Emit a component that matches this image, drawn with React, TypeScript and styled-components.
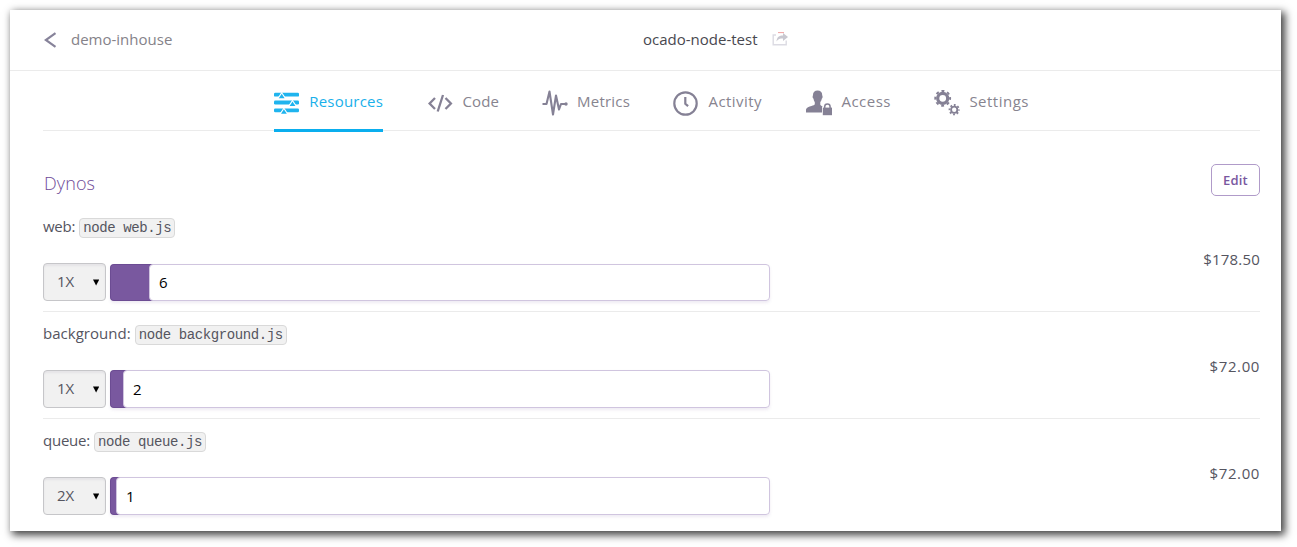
import React from "react";
import styled, { createGlobalStyle } from "styled-components";

const GlobalStyle = createGlobalStyle`
  * { box-sizing: border-box; }
  body {
    margin: 0;
    background: #fff;
    overflow: hidden;
    font-family: "Open Sans", sans-serif;
    font-size: 15px;
    color: #55555f;
  }
`;

const Stage = styled.div`
  height: 547px;
  padding: 10px 16px 16px 10px;
`;

const Panel = styled.main`
  height: 521px;
  background: #fff;
  box-shadow: 3px 3px 8px 1px rgba(0, 0, 0, 0.75);
`;

const Text = styled.span<{ $ls?: number }>`
  letter-spacing: ${(p) => p.$ls ?? 0}px;
  white-space: nowrap;
`;

const Header = styled.header`
  display: grid;
  grid-template-columns: 633px 1fr;
  align-items: center;
  height: 61px;
  border-bottom: 1px solid #ebebeb;
  span { margin-bottom: 2px; }
`;

const BackLink = styled.a`
  display: flex;
  align-items: center;
  padding-left: 34px;
  gap: 14px;
  color: #858289;
`;

const AppName = styled.div`
  display: flex;
  align-items: center;
  gap: 14px;
  color: #48484f;
  svg { margin-bottom: 2px; }
`;

const Tabs = styled.nav`
  display: flex;
  gap: 43px;
  height: 60px;
  margin: 0 21px 0 33px;
  padding-left: 231px;
  border-bottom: 1px solid #ebebeb;
`;

const Tab = styled.a<{ $width: number; $active?: boolean }>`
  display: flex;
  align-items: center;
  justify-content: space-between;
  width: ${(p) => p.$width}px;
  height: 61px;
  color: ${(p) => (p.$active ? "#1ab0ea" : "#87848f")};
  border-bottom: 3px solid ${(p) => (p.$active ? "#0aaeee" : "transparent")};
  svg { margin-top: 6px; }
  span { margin-top: 2px; }
`;

const Content = styled.section`
  padding: 0 21px 0 33px;
`;

const SectionHead = styled.div`
  display: flex;
  justify-content: space-between;
  align-items: flex-start;
  height: 73px;
  padding-top: 33px;
`;

const Title = styled.h2`
  margin: 6px 0 0 1px;
  font-size: 18px;
  line-height: 26px;
  font-weight: 300;
  letter-spacing: 0.1px;
  color: #6f4b98;
`;

const EditButton = styled.button`
  width: 49px;
  height: 32px;
  padding: 0;
  font: 600 13px "Open Sans", sans-serif;
  letter-spacing: 0.2px;
  color: #79589f;
  background: #fff;
  border: 1px solid #b09bc9;
  border-radius: 5px;
`;

const Row = styled.div`
  display: flex;
  justify-content: space-between;
  height: 107px;
  padding-top: 13px;

  & + & {
    padding-top: 12px;
    border-top: 1px solid #ebebeb;
  }
`;

const ProcessLine = styled.div`
  display: flex;
  align-items: center;
  gap: 4px;
  height: 22px;
  margin-bottom: 24px;
  span { margin-bottom: 4px; }
`;

const Command = styled.code`
  height: 20px;
  padding: 0 3px;
  font: 14px/18px "Liberation Mono", monospace;
  color: #55555f;
  letter-spacing: -0.4px;
  background: #f1f1f1;
  border: 1px solid #d9d9d9;
  border-radius: 4px;
`;

const Controls = styled.div`
  display: flex;
  align-items: flex-end;
  gap: 4px;
  height: 38px;
`;

const SizeSelect = styled.div`
  display: flex;
  align-items: center;
  justify-content: space-between;
  width: 63px;
  height: 38px;
  padding: 0 6px 0 13px;
  background: #f1f1f1;
  border: 1px solid #c6c6c9;
  border-radius: 4px;
  box-shadow: inset 0 2px 2px rgba(90, 80, 120, 0.08);
  span { margin-bottom: 2px; }
`;

const Slider = styled.div<{ $height: number }>`
  display: flex;
  width: 660px;
  height: ${(p) => p.$height}px;
  border-radius: 4px;
  box-shadow: 0 2px 3px rgba(121, 88, 159, 0.12);
`;

const Fill = styled.div<{ $width: number }>`
  width: ${(p) => p.$width + 4}px;
  margin-right: -4px;
  background: #79589f;
  border: solid #6c4c93;
  border-width: 1px 0 1px 1px;
  border-radius: 4px 0 0 4px;
`;

const Quantity = styled.div`
  display: flex;
  align-items: center;
  flex: 1;
  padding: 0 0 1px 9px;
  color: #000;
  background: #fff;
  border: 1px solid #d0c5df;
  border-radius: 4px;
`;

const Price = styled.div`
  margin-top: 31px;
  height: 22px;
  line-height: 22px;
`;

const BackIcon = () => (
  <svg width="13" height="16" viewBox="0 0 13 16" fill="none" stroke="#87839a" strokeWidth="2.2">
    <path d="M11.5 1.2 1.8 8l9.700 6.800" />
  </svg>
);

const ShareIcon = () => (
  <svg width="17" height="14" viewBox="0 0 17 14">
    <path d="M4 3H1.200v9.800h13V8.500" fill="none" stroke="#dcdbe3" strokeWidth="1.400" />
    <path d="M4.500 9.500c.3-4.500 2.800-6 6.500-6V1l5 4-5 4V6.500C8 6.500 6 7 4.500 9.500Z" fill="#c9c8d0" />
    <path d="M6 .6h6" stroke="#f0a3a3" />
  </svg>
);

const ResourcesIcon = () => (
  <svg width="25" height="23" viewBox="0 0 25 23">
    <g fill="#1fb4ee">
      <rect y=".8" width="25" height="3.800" rx="1.200" />
      <rect y="8.600" width="25" height="3.800" rx="1.200" />
      <rect y="16.400" width="25" height="3.800" rx="1.200" />
    </g>
    <g fill="#1fb4ee" stroke="#fff" strokeWidth="2.200" paintOrder="stroke">
      <path d="m7.700 1.800 2.900 4.400H4.800Z" />
      <path d="m18.500 9.600 2.900 4.400h-5.800Z" />
      <path d="m9.900 17.300 2.900 4.400H7Z" />
    </g>
  </svg>
);

const CodeIcon = () => (
  <svg width="27" height="18" viewBox="0 0 27 18" fill="none" stroke="#858195" strokeWidth="2.300">
    <path d="M9 4 3.600 9.500 9 15M19.500 4l5.400 5.500L19.500 15M17 1l-5.300 16.500" />
  </svg>
);

const MetricsIcon = () => (
  <svg width="26" height="26" viewBox="0 0 26 26" fill="none" stroke="#858195" strokeWidth="2.100" strokeLinejoin="round">
    <path d="M.5 14h4L7.500 1.500l3.500 23L14 5.500l3 14L19 14h5" />
    <circle cx="24" cy="14" r="1.700" fill="#858195" stroke="none" />
  </svg>
);

const ActivityIcon = () => (
  <svg width="25" height="25" viewBox="0 0 25 25" fill="none" stroke="#858195" strokeWidth="2.200">
    <circle cx="12.500" cy="12.500" r="11.200" />
    <path d="M12.300 6v6.800l2.800 2.400" />
  </svg>
);

const AccessIcon = () => (
  <svg width="27" height="26" viewBox="0 0 27 26">
    <path
      d="M8 5c0-3 1.700-4.500 4.600-4.500S17.200 2 17.200 5c0 1 .6 1 .4 2.200-.2.900-.6 1-.8 1.600-.4 2-1 2.600-1.500 3.400v2.600c.8 1.200 2 1.600 3 2V22.500H1v-3c.4-2 3-2.700 5.500-3.500 1.800-.5 3-1 3.300-1.700v-2.100C9 11 8.700 10 8.500 8.800 8 8 7.600 8 7.600 6.800Z"
      fill="#858195"
    />
    <path d="M17 16.500h10V26H17Z" fill="#fff" />
    <rect x="17.800" y="17.600" width="9.200" height="7.600" fill="#858195" />
    <path d="M19.700 18v-1.300a2.700 2.700 0 0 1 5.400 0V18" fill="none" stroke="#858195" strokeWidth="1.500" />
  </svg>
);

const SettingsIcon = () => (
  <svg width="26" height="26" viewBox="0 0 26 26" fill="none" stroke="#858195">
    <circle cx="8.700" cy="8.300" r="5" strokeWidth="3.200" />
    <circle cx="8.700" cy="8.300" r="7.400" strokeWidth="2" strokeDasharray="2.900 2.912" strokeDashoffset="1.450" />
    <circle cx="20.200" cy="19.700" r="3.100" strokeWidth="1.800" />
    <circle cx="20.200" cy="19.700" r="4.700" strokeWidth="1.800" strokeDasharray="1.850 1.841" strokeDashoffset=".92" />
  </svg>
);

const Caret = () => (
  <svg width="6" height="7" viewBox="0 0 6 7">
    <path d="M0 .5h6.200L3.100 6.500Z" fill="#000" />
  </svg>
);

const tabs = [
  { label: "Resources", icon: <ResourcesIcon />, width: 109, ls: 0.2, active: true },
  { label: "Code", icon: <CodeIcon />, width: 73, ls: 0.1 },
  { label: "Metrics", icon: <MetricsIcon />, width: 88, ls: 0.2 },
  { label: "Activity", icon: <ActivityIcon />, width: 89, ls: 0.45 },
  { label: "Access", icon: <AccessIcon />, width: 86, ls: 0.5 },
  { label: "Settings", icon: <SettingsIcon />, width: 95, ls: 0.5 },
];

const dynos = [
  { name: "web", ls: -0.25, command: "node web.js", size: "1X", quantity: 6, fill: 39, height: 37, price: "$178.50", priceLs: 0.2 },
  { name: "background", ls: 0.03, command: "node background.js", size: "1X", quantity: 2, fill: 13, height: 38, price: "$72.00", priceLs: 0.6 },
  { name: "queue", ls: -0.25, command: "node queue.js", size: "2X", quantity: 1, fill: 6, height: 38, price: "$72.00", priceLs: 0.6 },
];

export default function App() {
  return (
    <>
      <GlobalStyle />
      <Stage>
        <Panel>
          <Header>
            <BackLink>
              <BackIcon />
              <Text>demo-inhouse</Text>
            </BackLink>
            <AppName>
              <Text>ocado-node-test</Text>
              <ShareIcon />
            </AppName>
          </Header>
          <Tabs>
            {tabs.map((t) => (
              <Tab key={t.label} $width={t.width} $active={t.active}>
                {t.icon}
                <Text $ls={t.ls}>{t.label}</Text>
              </Tab>
            ))}
          </Tabs>
          <Content>
            <SectionHead>
              <Title>Dynos</Title>
              <EditButton>Edit</EditButton>
            </SectionHead>
            {dynos.map((d) => (
              <Row key={d.name}>
                <div>
                  <ProcessLine>
                    <Text $ls={d.ls}>{d.name}:</Text>
                    <Command>{d.command}</Command>
                  </ProcessLine>
                  <Controls>
                    <SizeSelect>
                      <Text>{d.size}</Text>
                      <Caret />
                    </SizeSelect>
                    <Slider $height={d.height}>
                      <Fill $width={d.fill} />
                      <Quantity>{d.quantity}</Quantity>
                    </Slider>
                  </Controls>
                </div>
                <Price>
                  <Text $ls={d.priceLs}>{d.price}</Text>
                </Price>
              </Row>
            ))}
          </Content>
        </Panel>
      </Stage>
    </>
  );
}
